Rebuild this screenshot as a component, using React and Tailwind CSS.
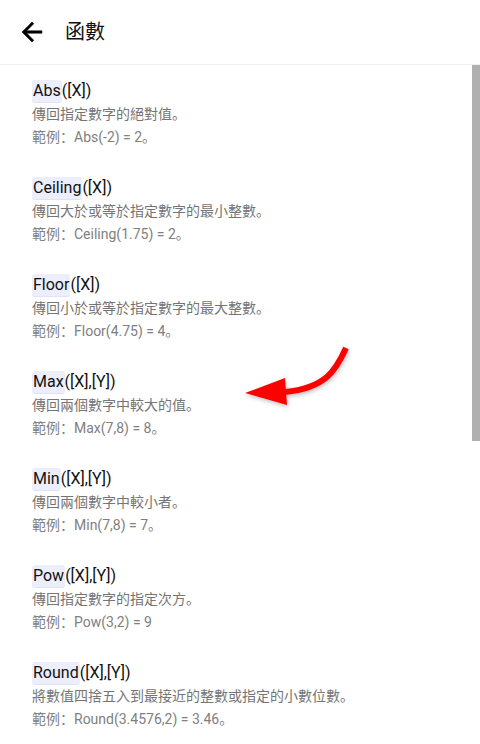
const functions = [
  { name: 'Abs', args: '([X])', desc: '傳回指定數字的絕對值。', example: '範例：Abs(-2) = 2。' },
  { name: 'Ceiling', args: '([X])', desc: '傳回大於或等於指定數字的最小整數。', example: '範例：Ceiling(1.75) = 2。' },
  { name: 'Floor', args: '([X])', desc: '傳回小於或等於指定數字的最大整數。', example: '範例：Floor(4.75) = 4。' },
  { name: 'Max', args: '([X],[Y])', desc: '傳回兩個數字中較大的值。', example: '範例：Max(7,8) = 8。' },
  { name: 'Min', args: '([X],[Y])', desc: '傳回兩個數字中較小者。', example: '範例：Min(7,8) = 7。' },
  { name: 'Pow', args: '([X],[Y])', desc: '傳回指定數字的指定次方。', example: '範例：Pow(3,2) = 9' },
  { name: 'Round', args: '([X],[Y])', desc: '將數值四捨五入到最接近的整數或指定的小數位數。', example: '範例：Round(3.4576,2) = 3.46。' },
];

const FunctionItem = ({ fn }) => (
  <div className="pb-[27px]">
    <div className="h-[24px] flex items-center text-[16px] text-[#111]">
      <span className="bg-[#eceefc] rounded-[3px] px-[1px] h-[23px] flex items-center border-b border-[#dfe3f8]">
        {fn.name}
      </span>
      <span>{fn.args}</span>
    </div>
    <p className="text-[14px] leading-[23px] text-[#757575]">{fn.desc}</p>
    <p className="text-[14px] leading-[23px] text-[#808080]">{fn.example}</p>
  </div>
);

export default function App() {
  return (
    <div
      className="relative w-[480px] h-[744px] overflow-hidden bg-white"
      style={{ fontFamily: 'Roboto, "Noto Sans CJK SC", sans-serif' }}
    >
      <header className="h-[65px] flex items-center border-b border-[#f0f0f0]">
        <svg viewBox="0 0 24 24" className="w-[30px] h-[30px] ml-[17px]" fill="#000">
          <path d="M20 11H7.83l5.59-5.59L12 4l-8 8 8 8 1.41-1.41L7.83 13H20v-2z" stroke="#000" strokeWidth="0.4" />
        </svg>
        <h1 className="ml-[18px] text-[20px] text-[#111]">函數</h1>
      </header>

      <div className="pl-[32px] pt-[14px]">
        {functions.map((fn) => (
          <FunctionItem key={fn.name} fn={fn} />
        ))}
      </div>

      <div className="absolute right-0 top-[65px] w-[8px] h-[376px] bg-[#b0b0b0]" />

      <svg
        viewBox="0 0 120 80"
        className="absolute left-[240px] top-[340px] w-[120px] h-[80px]"
        style={{ filter: 'drop-shadow(1px 2px 2px rgba(0,0,0,0.25))' }}
      >
        <path d="M106 8 C 96 30, 86 48, 45 52" fill="none" stroke="#ff0000" strokeWidth="6" />
        <polygon points="5,53 45,38 47,65" fill="#ff0000" />
      </svg>
    </div>
  );
}
